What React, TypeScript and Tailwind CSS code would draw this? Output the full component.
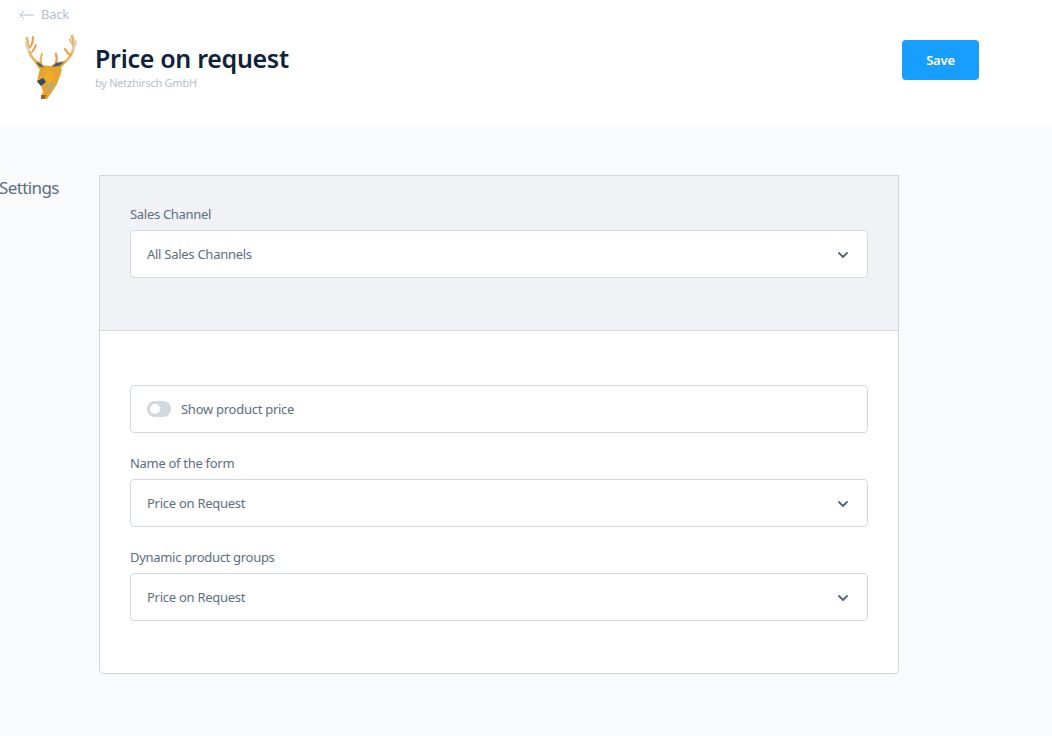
import { ChevronDown } from "lucide-react";

const font = { fontFamily: '"Noto Sans", sans-serif' };

const labelStyle = "block text-[13px] tracking-[-0.3px] leading-[18px] text-[#5b6e82] mb-[7px]";
const boxStyle = "flex items-center bg-white border border-[#d1d9e0] rounded-[4px] text-[13px] tracking-[-0.27px] text-[#5b6e82]";

const Deer = () => (
  <svg width="54" height="66" viewBox="24 34 54 66" fill="none" className="blur-[0.5px]">
    <g strokeLinecap="round" strokeLinejoin="round" fill="none">
      <path d="M41 65 C35 62 31 57 29 51 C28 46 28 42 27 38" stroke="#eab563" strokeWidth="2.6" />
      <path d="M29 50 C26 48 26 45 26 42" stroke="#d6d8d2" strokeWidth="2.4" />
      <path d="M30 47 C33 44 33 40 33 37" stroke="#eba24f" strokeWidth="2.2" />
      <path d="M32 52 C35 48 35 47 36 45" stroke="#ee9f45" strokeWidth="1.8" />
      <path d="M41 63 C40 60 41 57 42 54" stroke="#f0b264" strokeWidth="2.2" />
      <path d="M60 65 C66 62 71 57 73 50 C74 46 74 42 72 36" stroke="#eeb064" strokeWidth="2.6" />
      <path d="M73 49 C75 47 76 44 76 41" stroke="#d8d5c8" strokeWidth="2.2" />
      <path d="M70 55 C67 53 66 51 65 49" stroke="#ee9f45" strokeWidth="2.2" />
      <path d="M73 45 C71 43 70 41 70 39" stroke="#eeb57c" strokeWidth="1.8" />
      <path d="M56 63 C57 60 57 57 56 54" stroke="#ee9a52" strokeWidth="2.4" />
    </g>
    <path d="M41 65 L50 66 L60 66 L62 70 L60 76 L57 84 L52 92 L47 99 L41 99 L43 91 L41 86 L37 82 L39 72 Z" fill="#e3a52c" />
    <path d="M34 61 L41 62 L45 68 L39 69 Z" fill="#e3a52c" />
    <path d="M36 62 L41 64 L44 68 L39 66 Z" fill="#3f5b86" />
    <path d="M67 61 L56 62 L50 67 L60 69 Z" fill="#e3a52c" />
    <path d="M64 62 L56 63 L52 67 L59 66 Z" fill="#3f5b86" />
    <path d="M37 81 L43 78 L46 82 L41 86 Z" fill="#34496f" />
    <path d="M47 70 L55 74 L51 84 L45 78 Z" fill="#f0ac2e" />
    <path d="M50 82 L55 84 L50 92 L46 88 Z" fill="#bfa76e" />
    <path d="M41 95 L46 95 L45 99 L41 99 Z" fill="#a0602c" />
  </svg>
);

const Select = ({ value }: { value: string }) => (
  <div className={`${boxStyle} h-[48px] pl-4 pr-4 justify-between`}>
    <span className="pt-[2px]">{value}</span>
    <ChevronDown size={16} strokeWidth={2.75} className="mt-[2px] text-[#52667a]" />
  </div>
);

const App = () => {
  return (
    <div className="min-h-[736px] bg-[#f9fafc] overflow-hidden" style={font}>
      <div className="h-[127px] bg-white relative">
        <div className="flex items-center h-[28px] pt-[1px] pl-[19px] text-[13px] text-[#b3c0cf] tracking-[-0.25px]">
          <svg width="15" height="10" viewBox="0 0 15 10" fill="none" stroke="#b3c0cf" strokeWidth="1" className="mr-[7px]">
            <path d="M15 5H1M5 1 1 5l4 4" />
          </svg>
          Back
        </div>
        <div className="flex items-start pl-[24px] pr-[73px]">
          <div className="w-[54px] h-[66px] mt-[6px] shrink-0">
            <Deer />
          </div>
          <div className="ml-[17px] mt-[11px]">
            <h1 className="text-[25px] leading-[38px] font-semibold text-[#0e2239] tracking-[-0.3px]">Price on request</h1>
            <p className="text-[11px] leading-[12px] text-[#b3c0cf] tracking-[-0.25px]">by Netzhirsch GmbH</p>
          </div>
          <button className="ml-auto mt-[12px] w-[77px] h-[40px] pt-[2px] rounded-[4px] bg-[#189eff] text-white text-[13px] font-semibold tracking-[-0.2px]">
            Save
          </button>
        </div>
      </div>

      <div className="flex pt-[48px]">
        <div className="w-[99px] shrink-0 text-[17px] leading-[24px] text-[#5b6e82] tracking-[-0.6px] pt-[1px] ml-[-1px] mr-[1px]">
          Settings
        </div>
        <div className="w-[800px] border border-[#d1d9e0] rounded-b-[4px] bg-white">
          <div className="h-[155px] bg-[#f0f2f5] border-b border-[#d1d9e0] pt-[29px] px-[30px]">
            <label className={labelStyle}>Sales Channel</label>
            <Select value="All Sales Channels" />
          </div>
          <div className="px-[30px] pt-[54px] pb-[52px]">
            <div className={`${boxStyle} h-[48px] pl-4`}>
              <span className="relative w-[24px] h-[16px] rounded-full bg-[#d1d9e0] mr-[10px]">
                <span className="absolute left-[3px] top-[3px] w-[10px] h-[10px] rounded-full bg-white" />
              </span>
              <span className="pt-[2px]">Show product price</span>
            </div>
            <label className={`${labelStyle} mt-[21px]`}>Name of the form</label>
            <Select value="Price on Request" />
            <label className={`${labelStyle} mt-[21px]`}>Dynamic product groups</label>
            <Select value="Price on Request" />
          </div>
        </div>
      </div>
    </div>
  );
};

export default App;
